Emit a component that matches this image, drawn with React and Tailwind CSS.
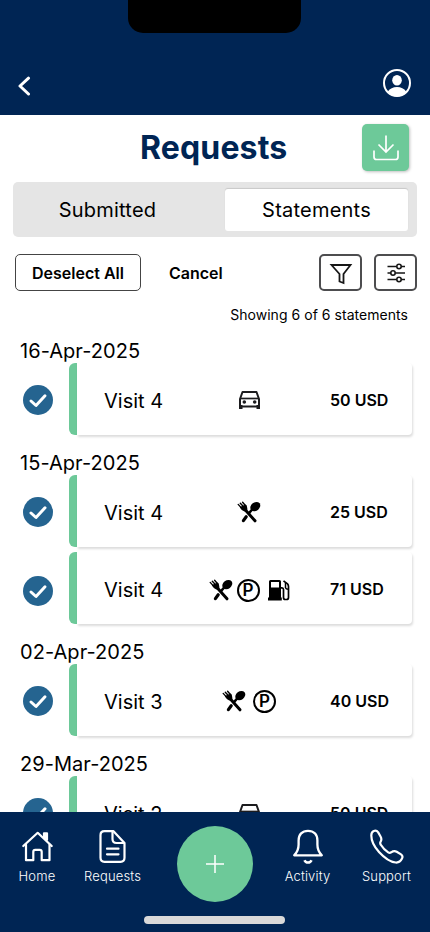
import { useState } from "react";
import clsx from "clsx";

const groups = [
  {
    date: "16-Apr-2025",
    items: [{ id: 1, visit: "Visit 4", amount: "50 USD", types: ["car"] }],
  },
  {
    date: "15-Apr-2025",
    items: [
      { id: 2, visit: "Visit 4", amount: "25 USD", types: ["food"] },
      { id: 3, visit: "Visit 4", amount: "71 USD", types: ["food", "parking", "fuel"] },
    ],
  },
  {
    date: "02-Apr-2025",
    items: [{ id: 4, visit: "Visit 3", amount: "40 USD", types: ["food", "parking"] }],
  },
  {
    date: "29-Mar-2025",
    items: [{ id: 5, visit: "Visit 2", amount: "50 USD", types: ["car"] }],
  },
];

function CarIcon() {
  return (
    <svg className="h-[18px] w-[21px]" viewBox="0 0 21 18" fill="none">
      <path d="M1 8 3.500 1h14L20 8v7.500H1z" stroke="#1c1c1e" strokeWidth="2" strokeLinejoin="round" />
      <path d="M2 7.500h17" stroke="#1c1c1e" strokeWidth="1.700" />
      <path d="M0 14h3.500v4H0zM17.500 14H21v4h-3.500z" fill="#1c1c1e" />
      <circle cx="5.300" cy="11" r="1.800" fill="#1c1c1e" />
      <circle cx="15.700" cy="11" r="1.800" fill="#1c1c1e" />
    </svg>
  );
}

function FoodIcon() {
  return (
    <svg className="h-[22px] w-6" viewBox="0 0 24 22" fill="none">
      <path d="M8.600 9.200 18 19.800" stroke="black" strokeWidth="3" strokeLinecap="round" />
      <path d="M14.300 9.500 12.400 11.600" stroke="black" strokeWidth="2.600" strokeLinecap="round" />
      <path d="M9.200 15.800 6.400 19.600" stroke="black" strokeWidth="3.200" strokeLinecap="round" />
      <path d="M1.200 3.400 5 7.600M3.300 2.200 6.800 6M5.600 1.200 9 5.200" stroke="black" strokeWidth="1.400" strokeLinecap="round" />
      <path d="M2.800 6 8.800 3.400c1.200 1.700 1.700 3.600 1.500 5.800l-1.500 1.500C6 10.200 4 8.700 2.800 6z" fill="black" />
      <ellipse cx="18.300" cy="5.600" rx="5.400" ry="4.200" transform="rotate(-38 18.300 5.600)" fill="black" />
    </svg>
  );
}

function ParkingIcon() {
  return (
    <span className="flex size-[23px] items-center justify-center rounded-full border-2 border-black text-[17px] leading-none font-semibold">
      P
    </span>
  );
}

function FuelIcon() {
  return (
    <svg className="ml-1 h-[22px] w-[22px]" viewBox="0 0 22 22" fill="none">
      <path fillRule="evenodd" d="M1 2.500Q1 1 2.500 1h9Q13 1 13 2.500V18.500h.8V21.500H0V18.500h1zM3 3v5.500h8V3z" fill="black" />
      <path d="M13 8.800h1q1.500 0 1.500 1.700v8q0 2 1.800 2h1.200q2 0 2-2V7.500q0-1.500-1-2.600L15.500 1.800" stroke="black" strokeWidth="1.700" />
      <path d="M17.500 3.500v5.200q.5 1.500 2.800 1.500" stroke="black" strokeWidth="1.500" />
    </svg>
  );
}

function TypeIcon({ type }) {
  if (type === "food") return <FoodIcon />;
  if (type === "parking") return <ParkingIcon />;
  if (type === "fuel") return <FuelIcon />;
  return <CarIcon />;
}

function StatementRow({ item, selected, onToggle, low }) {
  return (
    <div className="flex h-[72px] items-center">
      <button
        type="button"
        onClick={() => onToggle(item.id)}
        className={clsx("mr-4 ml-[23px] shrink-0", low ? "pt-1.5" : "pt-0.5")}
      >
        <svg className="size-[30px]" viewBox="0 0 30 30" fill="none">
          <circle cx="15" cy="15" r="15" fill={selected ? "#256490" : "#d9d9d9"} />
          <path d="M8 16 13 20.500 22 10.800" stroke="white" strokeWidth="3" strokeLinecap="round" strokeLinejoin="round" />
        </svg>
      </button>
      <div className="h-full w-2 rounded-l-[6px] bg-[#6dc999]" />
      <div className="flex h-full w-[335px] items-center rounded-r-[4px] bg-white pt-1 shadow-[1px_2px_2.5px_rgba(0,0,0,0.14)]">
        <span className="w-[96px] pl-[27px] text-xl whitespace-nowrap">{item.visit}</span>
        <span
          className={clsx(
            "flex w-[152px] items-center justify-center",
            item.types.length === 3 ? "gap-1" : "gap-[7px] pb-0.5"
          )}
        >
          {item.types.map((type) => (
            <TypeIcon key={type} type={type} />
          ))}
        </span>
        <span className="pb-0.5 pl-[5px] text-base font-semibold whitespace-nowrap">{item.amount}</span>
      </div>
    </div>
  );
}

export default function App() {
  const [tab, setTab] = useState("Statements");
  const [selected, setSelected] = useState([1, 2, 3, 4, 5]);

  const toggle = (id) => {
    setSelected(selected.includes(id) ? selected.filter((s) => s !== id) : [...selected, id]);
  };

  return (
    <div className="flex h-[932px] w-[430px] flex-col overflow-hidden bg-white font-[Inter,sans-serif] text-black">
      {/* Header */}
      <header className="h-[115px] shrink-0 bg-[#002554]">
        <div className="ml-32 h-[33px] w-[173px] rounded-b-[15px] bg-black" />
        <div className="flex items-center justify-between pt-[35px] pr-[18px] pl-[17px]">
          <button type="button">
            <svg className="mt-1.5 h-5 w-4" viewBox="0 0 16 20" fill="none">
              <path d="M11.500 2.200 3 10l8.500 8" stroke="white" strokeWidth="3" strokeLinecap="round" strokeLinejoin="round" />
            </svg>
          </button>
          <button type="button">
            <svg className="size-[30px]" viewBox="0 0 30 30" fill="none">
              <circle cx="15" cy="15" r="13" stroke="white" strokeWidth="2" />
              <ellipse cx="15" cy="12.300" rx="4.800" ry="5.200" fill="white" />
              <path d="M5.800 23.500c2-2.800 5.300-4.500 9.200-4.500s7.200 1.700 9.200 4.500c-2.200 3.200-5.400 5-9.200 5s-7-1.800-9.200-5z" fill="white" />
            </svg>
          </button>
        </div>
      </header>

      {/* Content */}
      <main className="min-h-0 flex-1 overflow-hidden">
        <div className="grid grid-cols-[140px_147px_1fr] items-center pt-[9px]">
          <h1 className="col-start-2 text-center text-[32px] leading-none font-bold tracking-[0.15px] whitespace-nowrap text-[#002554]">
            Requests
          </h1>
          <button
            type="button"
            className="mr-[21px] flex size-[47px] items-center justify-center justify-self-end rounded-[5px] bg-[#6dc999] shadow-[1px_1px_3px_rgba(0,0,0,0.25)]"
          >
            <svg className="h-[26px] w-[26px]" viewBox="0 0 26 26" fill="none" stroke="white" strokeWidth="1.700">
              <path d="M13 .5v16M5.500 9.500 13 17l7.500-7.500" />
              <path d="M1 15.500v6.500q0 2.500 2.500 2.500h19q2.500 0 2.500-2.500V15.500" />
            </svg>
          </button>
        </div>

        <div className="mx-[13px] mt-[11px] flex h-[55px] rounded-[5px] bg-[#e5e5e5] pt-[7px] pr-[9px] pb-1.5 pl-[5px]">
          {["Submitted", "Statements"].map((name) => (
            <button
              key={name}
              type="button"
              onClick={() => setTab(name)}
              className={clsx(
                "rounded-[3px] pb-px text-xl tracking-[0.22px]",
                name === "Submitted" ? "mr-[17px] w-[190px] pr-[11px]" : "flex-1",
                tab === name && "bg-white shadow-[0_-1px_1px_rgba(0,0,0,0.13)]"
              )}
            >
              {name}
            </button>
          ))}
        </div>

        <div className="mt-[17px] flex h-[37px] items-center pr-[13px] pl-[15px]">
          <button
            type="button"
            onClick={() => setSelected([])}
            className="h-full w-[126px] rounded-[5px] border border-[#444] text-base font-semibold whitespace-nowrap"
          >
            Deselect All
          </button>
          <button type="button" className="ml-7 text-base font-semibold">
            Cancel
          </button>
          <button
            type="button"
            className="ml-auto flex h-full w-[43px] items-center justify-center rounded-[5px] border-2 border-[#4d4d4f]"
          >
            <svg className="mt-0.5 h-[22px] w-6" viewBox="0 0 24 22" fill="none" stroke="#161616" strokeWidth="1.800">
              <path d="M2.500 2h19l-7 9v9l-4-1.500V11z" />
            </svg>
          </button>
          <button
            type="button"
            className="ml-3 flex h-full w-[43px] items-center justify-center rounded-[5px] border-2 border-[#4d4d4f]"
          >
            <svg className="h-5 w-[18px]" viewBox="0 0 18 20" fill="none" stroke="#161616" strokeWidth="1.600">
              <path d="M.5 3.500h9M14 3.500h4M.5 10H4M8.500 10H18M.5 16.500h9M14 16.500h4" />
              <circle cx="12" cy="3.500" r="2.200" />
              <circle cx="6" cy="10" r="2.200" />
              <circle cx="12" cy="16.500" r="2.200" />
            </svg>
          </button>
        </div>

        <p className="mt-3.5 pr-[22px] text-right text-sm leading-5 tracking-[0.04px]">
          Showing 6 of 6 statements
        </p>

        <div className="mt-3.5 flex flex-col gap-4">
          {groups.map((group) => (
            <section key={group.date}>
              <h2 className="pl-5 text-xl leading-6 tracking-[0.05px]">{group.date}</h2>
              <div className="flex flex-col gap-[5px]">
                {group.items.map((item, i) => (
                  <StatementRow
                    key={item.id}
                    item={item}
                    selected={selected.includes(item.id)}
                    onToggle={toggle}
                    low={i > 0}
                  />
                ))}
              </div>
            </section>
          ))}
        </div>
      </main>

      {/* Bottom navigation */}
      <nav className="relative z-10 h-[120px] shrink-0 bg-[#002554] text-[13px] leading-4 font-light tracking-[0.15px] text-white">
        <div className="flex h-[104px] items-start pt-3.5">
          <div className="flex w-[74px] flex-col items-center gap-1 pt-[3px]">
            <svg className="h-[35px] w-9" viewBox="0 0 36 35" fill="none" stroke="white" strokeWidth="2.200" strokeLinejoin="round" strokeLinecap="round">
              <path d="M4.300 17 18.700 3.800 32.700 17" />
              <path d="M7 15.500v15.700h7.300v-8.400q0-2 2-2h4.400q2 0 2 2v8.400h7.800V15.500" />
              <path d="M25 8V4.300h3v6.500z" fill="white" />
            </svg>
            <span>Home</span>
          </div>
          <div className="flex w-[77px] flex-col items-center gap-1 pt-[3px]">
            <svg className="h-[35px] w-7" viewBox="0 0 28 35" fill="none" stroke="white" strokeWidth="2.200" strokeLinejoin="round" strokeLinecap="round">
              <path d="M5.500 2.200H14.500L25.500 14V28.800q0 4-4 4H5.500q-4 0-4-4V6.200q0-4 4-4z" />
              <path d="M13.500 2.500v7.500q0 4 4 4h7.500M8 19.700h11.500M8 25.300h11.500" />
            </svg>
            <span>Requests</span>
          </div>
          <button type="button" className="ml-[26px] flex size-[76px] items-center justify-center rounded-full bg-[#6dc999]">
            <svg className="size-[18px]" viewBox="0 0 18 18" stroke="white" strokeWidth="1.500">
              <path d="M9 0v18M0 9h18" />
            </svg>
          </button>
          <div className="ml-4 flex w-[77px] flex-col items-center gap-1 pt-[3px]">
            <svg className="h-[35px] w-8" viewBox="0 0 32 35" fill="none" stroke="white" strokeWidth="2.300">
              <path d="M2.200 26.300C5.500 23 6.600 19.500 6.600 15.500V11.500C6.600 5.500 10.200 1.800 16 1.800s9.400 3.700 9.400 9.700v4c0 4 1.100 7.500 4.400 10.800z" strokeLinejoin="round" />
              <path d="M12.500 31.200q1 2.300 3.500 2.300t3.500-2.300" strokeWidth="2.600" />
            </svg>
            <span>Activity</span>
          </div>
          <div className="ml-0.5 flex w-[77px] flex-col items-center gap-1 pt-[3px]">
            <svg className="h-[35px] w-[34px]" viewBox="0 0 34 35" fill="none" stroke="white" strokeWidth="2.200" strokeLinejoin="round">
              <path d="M1.300 6.500C1.300 4 2.200 2.600 3.800 2 5.600 1.300 7 1.700 8.200 3.400l2.200 3.800c1.400 2.300 1.300 3.600.3 5.300-.8 1.300-.8 2 .1 3.300 1.800 3 4.500 5.600 7.400 7.500 1.200.8 1.900.7 3 0 1.700-1.200 3.500-1.700 5.500-.6l4.300 2.700c1.600 1.100 1.900 2.400 1 4.200-1.300 2.600-3.300 4.200-6.300 3.900C20.500 33 14 28.500 9 23 4.500 18 1.300 12 1.300 6.500z" />
            </svg>
            <span>Support</span>
          </div>
        </div>
        <div className="ml-36 h-2 w-[141px] rounded-full bg-[#d9d9d9]" />
      </nav>
    </div>
  );
}
